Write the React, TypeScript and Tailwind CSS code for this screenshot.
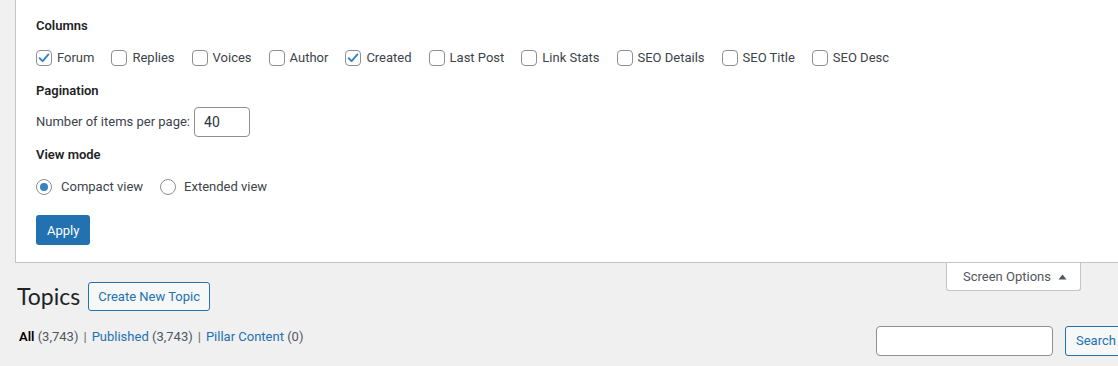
type Col = { label: string; checked: boolean };

const columns: Col[] = [
  { label: "Forum", checked: true },
  { label: "Replies", checked: false },
  { label: "Voices", checked: false },
  { label: "Author", checked: false },
  { label: "Created", checked: true },
  { label: "Last Post", checked: false },
  { label: "Link Stats", checked: false },
  { label: "SEO Details", checked: false },
  { label: "SEO Title", checked: false },
  { label: "SEO Desc", checked: false },
];

const Checkbox = ({ checked }: { checked: boolean }) => (
  <span className="flex h-[16px] w-[16px] shrink-0 items-center justify-center rounded-[4px] border border-[#8c8f94] bg-white">
    {checked && (
      <svg width="14" height="14" viewBox="0 0 14 14" fill="none">
        <path d="M2.6 7.2 L5.6 10.2 L11.4 3.4" stroke="#3582c4" strokeWidth="1.9" strokeLinecap="round" strokeLinejoin="round" />
      </svg>
    )}
  </span>
);

const Radio = ({ checked }: { checked: boolean }) => (
  <span className="flex h-[16px] w-[16px] shrink-0 items-center justify-center rounded-full border border-[#8c8f94] bg-white">
    {checked && <span className="h-[8px] w-[8px] rounded-full bg-[#3582c4]" />}
  </span>
);

const Heading = ({ children }: { children: React.ReactNode }) => (
  <div className="h-[18px] text-[13px] leading-[18px] font-semibold text-[#1d2327]">{children}</div>
);

export default function App() {
  return (
    <div className="h-[366px] w-[1118px] overflow-hidden bg-[#f0f0f1] font-['Roboto',sans-serif] text-[13px] text-[#3c434a]">
      {/* screen options panel */}
      <div className="ml-[15px] border-b border-l border-[#c3c4c7] bg-white pt-[17px] pb-[17px] pl-[20px]">
        <Heading>Columns</Heading>
        <div className="mt-[15px] flex h-[16px] items-center">
          {columns.map((c) => (
            <label key={c.label} className="mr-[17px] flex items-center gap-[5px] leading-[16px]">
              <Checkbox checked={c.checked} />
              <span>{c.label}</span>
            </label>
          ))}
        </div>

        <div className="mt-[16px]">
          <Heading>Pagination</Heading>
        </div>
        <div className="mt-[7px] flex h-[30px] items-center gap-[4px]">
          <span>Number of items per page:</span>
          <div className="flex h-[30px] w-[56px] items-center rounded-[4px] border border-[#8c8f94] bg-white px-[9px] text-[14px] text-[#2c3338]">
            40
          </div>
        </div>

        <div className="mt-[9px]">
          <Heading>View mode</Heading>
        </div>
        <div className="mt-[15px] flex h-[16px] items-center">
          <label className="mr-[17px] flex items-center gap-[9px]">
            <Radio checked />
            <span>Compact view</span>
          </label>
          <label className="flex items-center gap-[8px]">
            <Radio checked={false} />
            <span>Extended view</span>
          </label>
        </div>

        <button className="mt-[20px] flex h-[30px] items-center rounded-[3px] bg-[#2271b1] px-[11px] pt-[1px] text-[13px] text-white">
          Apply
        </button>
      </div>

      <div className="relative pt-[19px]">
        {/* screen options tab */}
        <div className="absolute top-0 right-[37px] flex h-[28px] w-[135px] items-center rounded-b-[3px] border border-t-0 border-[#c3c4c7] bg-white pl-[16px] text-[#50575e]">
          <span>Screen Options</span>
          <svg className="ml-[7px]" width="9" height="6" viewBox="0 0 9 6">
            <path d="M0.5 5.6 L4.5 0.6 L8.5 5.6 Z" fill="#50575e" />
          </svg>
        </div>

        <div className="flex h-[29px] items-center pl-[17px]">
          <h1 className="font-['Lato',sans-serif] text-[23px] leading-[29px] font-normal text-[#1d2327]">Topics</h1>
          <button className="ml-[8px] flex h-[29px] items-center rounded-[3px] border border-[#2271b1] bg-[#f6f7f7] px-[9px] text-[13px] text-[#2271b1]">
            Create New Topic
          </button>
        </div>

        <div className="mt-[15px] flex items-start">
          <ul className="mt-[2px] flex w-[876px] shrink-0 items-center pl-[19px] leading-[18px] text-[#646970]">
            <li>
              <span className="font-semibold text-[#000]">All</span> <span className="text-[#50575e]">(3,743)</span>
              <span className="mx-[5px]">|</span>
            </li>
            <li>
              <span className="text-[#2271b1]">Published</span> <span className="text-[#50575e]">(3,743)</span>
              <span className="mx-[5px]">|</span>
            </li>
            <li>
              <span className="text-[#2271b1]">Pillar Content</span> <span className="text-[#50575e]">(0)</span>
            </li>
          </ul>
          <div className="flex shrink-0 items-center">
            <div className="h-[30px] w-[177px] rounded-[4px] border border-[#8c8f94] bg-white" />
            <button className="ml-[12px] flex h-[30px] items-center rounded-[3px] border border-[#2271b1] bg-[#f6f7f7] px-[10px] text-[13px] whitespace-nowrap text-[#2271b1]">
              Search Topics
            </button>
          </div>
        </div>
      </div>
    </div>
  );
}
